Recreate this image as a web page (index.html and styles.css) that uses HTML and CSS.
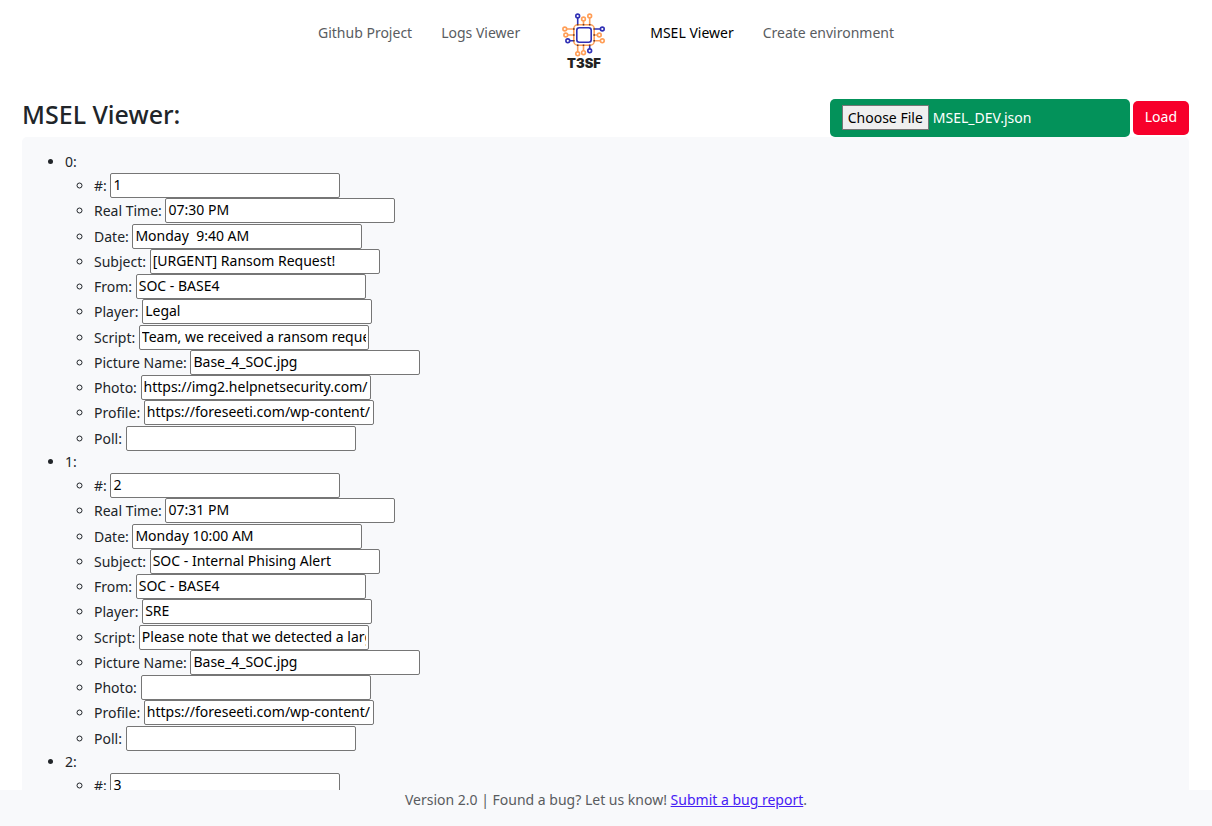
FILE: index.html
```html
<!DOCTYPE html>
<html lang="en">
<head>
<meta charset="utf-8">
<title>MSEL Viewer</title>
<link rel="stylesheet" href="styles.css">
</head>
<body>
<header class="site-header">
  <nav class="nav">
    <a class="nav-link" href="#github">Github Project</a>
    <a class="nav-link" href="#logs">Logs Viewer</a>
    <a class="brand" href="#home" aria-label="T3SF home">
      <svg class="logo" viewBox="0 0 46 60" width="46" height="60" fill="none">
        <g stroke="#ff9e57" stroke-width="1.6">
          <rect x="12.8" y="13.8" width="20.4" height="20.4" rx="4"/>
          <path d="M22.5 13V10M28.7 13V7M12 18H6M12 24H7M34 24H36M34 29.8H39M16.7 35V41M22.5 35V40"/>
          <circle cx="22.5" cy="8" r="1.9"/><circle cx="28.7" cy="5" r="1.9"/>
          <circle cx="3.8" cy="18" r="1.9"/><circle cx="4.8" cy="24" r="1.9"/>
          <circle cx="38.3" cy="24" r="1.9"/><circle cx="41.3" cy="29.8" r="1.9"/>
          <circle cx="16.7" cy="42.8" r="1.9"/><circle cx="22.5" cy="41.7" r="1.9"/>
        </g>
        <g stroke="#3030b5" stroke-width="1.6">
          <rect x="15.8" y="16.8" width="14.4" height="14.4" rx="2.5"/>
          <path d="M16.7 13V7M34 18H39M12 29.8H9M28.7 35V38"/>
          <circle cx="16.7" cy="5" r="1.9"/><circle cx="41.3" cy="18" r="1.9"/>
          <circle cx="6.8" cy="29.8" r="1.9"/><circle cx="28.7" cy="39.8" r="1.9"/>
        </g>
        <path stroke="#5b3c38" stroke-width="1.6" d="M16.7 13v1.6M22.5 13v1.6M28.7 13v1.6M16.7 33.4v1.6M22.5 33.4v1.6M28.7 33.4v1.6M12 18h1.6M12 24h1.6M12 29.8h1.6M32.4 18h1.6M32.4 24h1.6M32.4 29.8h1.6"/>
        <text class="logo-text" x="23" y="57" text-anchor="middle">T3SF</text>
      </svg>
    </a>
    <a class="nav-link active" href="#msel" aria-current="page">MSEL Viewer</a>
    <a class="nav-link" href="#create">Create environment</a>
  </nav>
</header>
<main class="content">
  <div class="toolbar">
    <h1 class="title">MSEL Viewer:</h1>
    <form class="loader">
      <input class="file" type="file" id="msel-file" aria-label="MSEL file" accept=".json">
      <button class="load" type="button">Load</button>
    </form>
  </div>
  <section class="panel">
    <ul class="entries" id="entries"></ul>
  </section>
</main>
<footer class="footer">
  <p class="footer-text">Version 2.0 | Found a bug? Let us know! <a class="bug-link" href="#report">Submit a bug report</a>.</p>
</footer>
<script src="viewer.js"></script>
</body>
</html>
```
FILE: styles.css
```css
* {
  box-sizing: border-box;
}

body {
  margin: 0;
  height: 100vh;
  display: flex;
  flex-direction: column;
  font-family: "Noto Sans", "Open Sans", sans-serif;
  font-size: 14px;
  line-height: 22px;
  color: #212529;
  background: #fff;
}

.site-header {
  flex: none;
  padding: 11px 22px 0;
}

.nav {
  display: flex;
  justify-content: center;
  align-items: flex-start;
  gap: 29px;
}

.nav-link {
  padding: 11px 0;
  color: #595c5f;
  text-decoration: none;
}

.nav-link.active {
  color: #000;
}

.brand {
  margin: 0 14px 0 12px;
}

.logo {
  display: block;
}

.logo-text {
  font: 900 13px Inter, "Liberation Sans", sans-serif;
  fill: #222;
}

.content {
  flex: 1;
  min-height: 0;
  padding: 28px 23px 0 22px;
  overflow: auto;
  scrollbar-width: none;
}

.toolbar {
  display: flex;
  justify-content: space-between;
}

.title {
  margin: 0;
  font-size: 25px;
  line-height: 30px;
  font-weight: 500;
}

.loader {
  display: flex;
  align-items: center;
  gap: 3px;
}

.file {
  width: 300px;
  height: 38px;
  padding: 6px 12px;
  border-radius: 5px;
  background: #03925a;
  color: #fff;
  font: inherit;
  line-height: 24px;
}

.file::file-selector-button {
  height: 25px;
  margin: 0 4px 0 0;
  padding: 0 5px;
  border: 1px solid #767676;
  border-radius: 0;
  background: #efefef;
  color: #000;
  font: inherit;
}

.load {
  height: 34px;
  padding: 0 12px 2px;
  border: 0;
  border-radius: 5px;
  background: #f7002b;
  color: #fff;
  font: inherit;
}

.panel {
  padding: 14px 14px 64px;
  border-radius: 5px;
  background: #f8f9fb;
}

.entries {
  margin: 0;
  padding-left: 29px;
}

.fields {
  display: grid;
  min-height: 278px;
  margin: 0;
  padding-left: 29px;
}

.field {
  line-height: 25px;
}

.value {
  width: 230px;
  height: 25px;
  margin: 0;
  padding: 0 2px 2px;
  border: 1px solid #767676;
  border-radius: 2px;
  background: #fff;
  color: #000;
  font: inherit;
  line-height: 21px;
  vertical-align: top;
}

.footer {
  flex: none;
  height: 36px;
  background: #f8f9fb;
  text-align: center;
  color: #595c5f;
}

.footer-text {
  margin: 0;
  line-height: 20px;
}

.bug-link {
  color: #4620f5;
}
```
FILE: viewer.js
```js
const names = ["#", "Real Time", "Date", "Subject", "From", "Player", "Script", "Picture Name", "Photo", "Profile", "Poll"];
const rows = [
  ["1", "07:30 PM", "Monday  9:40 AM", "[URGENT] Ransom Request!", "SOC - BASE4", "Legal", "Team, we received a ransom reque", "Base_4_SOC.jpg", "https://img2.helpnetsecurity.com/", "https://foreseeti.com/wp-content/", ""],
  ["2", "07:31 PM", "Monday 10:00 AM", "SOC - Internal Phising Alert", "SOC - BASE4", "SRE", "Please note that we detected a large", "Base_4_SOC.jpg", "", "https://foreseeti.com/wp-content/", ""],
  ["3"]
];

const list = document.getElementById("entries");
rows.forEach((values, i) => {
  const item = document.createElement("li");
  item.append(i + ":");
  const fields = document.createElement("ul");
  fields.className = "fields";
  values.forEach((value, j) => {
    const field = document.createElement("li");
    field.className = "field";
    const label = document.createElement("label");
    label.textContent = names[j] + ":";
    label.htmlFor = `entry-${i}-${j}`;
    const input = document.createElement("input");
    input.className = "value";
    input.type = "text";
    input.id = label.htmlFor;
    input.value = value;
    field.append(label, " ", input);
    fields.append(field);
  });
  item.append(fields);
  list.append(item);
});

const loaded = new DataTransfer();
loaded.items.add(new File(["[]"], "MSEL_DEV.json"));
document.getElementById("msel-file").files = loaded.files;
```
